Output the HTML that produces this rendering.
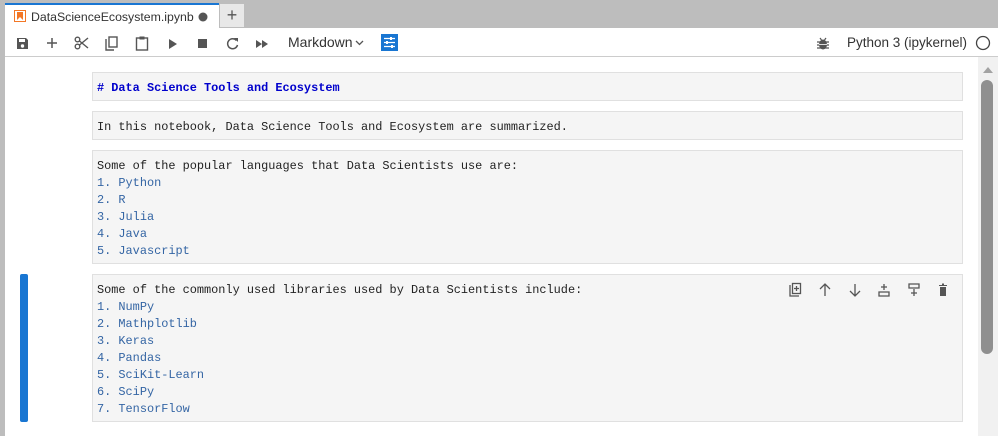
<!DOCTYPE html>
<html><head><meta charset="utf-8"><style>
*{margin:0;padding:0;box-sizing:border-box}
body{width:998px;height:436px;overflow:hidden;background:#bdbdbd;font-family:"Liberation Sans",sans-serif;position:relative}
.abs{position:absolute}
.tab{left:5px;top:3px;width:214px;height:26px;background:#fff;border-top:2px solid #1976d2}
.tab span{position:absolute;left:26px;top:5px;font-size:12.3px;color:#333}
.plus{left:220px;top:4px;width:24px;height:23px;background:#e8e8e8;color:#555;font-size:18px;text-align:center;line-height:22px}
.tb{left:5px;top:28px;width:993px;height:29px;background:#fff;border-bottom:1px solid #ccc}
.main{left:5px;top:57px;width:973px;height:379px;background:#fff}
.sb{left:978px;top:57px;width:20px;height:379px;background:#f1f1f1}
.cell{position:absolute;left:92px;width:871px;background:#f5f5f5;border:1px solid #e0e0e0;font-family:"Liberation Mono",monospace;font-size:11.9px;line-height:17px;color:#222;padding:7px 0 0 4px;white-space:pre}
.b{color:#3465a4}
.h{color:#0000cc;font-weight:bold}
svg{position:absolute}
</style></head><body>
<div class="abs tab"><svg style="left:9px;top:5px" width="12" height="12"><rect x="0.5" y="0.5" width="11" height="11" fill="#fff" stroke="#f37726"/><path d="M3 2h6v8l-3-3-3 3z" fill="#f37726"/></svg><span>DataScienceEcosystem.ipynb</span><svg style="left:193px;top:7px" width="10" height="10"><circle cx="5" cy="5" r="4.5" fill="#555"/></svg></div>
<div class="abs plus">+</div>
<div class="abs tb">
<svg style="left:11px;top:9px" width="13" height="13"><path d="M1 1h9l2 2v9H1z" fill="#555"/><rect x="3" y="2" width="6" height="3" fill="#fff"/><circle cx="6.5" cy="9" r="1.7" fill="#fff"/></svg>
<svg style="left:41px;top:9px" width="12" height="12"><path d="M6 1v10M1 6h10" stroke="#555" stroke-width="1.5"/></svg>
<svg style="left:69px;top:8px" width="15" height="14"><circle cx="3.5" cy="3.5" r="2.3" fill="none" stroke="#555" stroke-width="1.4"/><circle cx="3.5" cy="10.5" r="2.3" fill="none" stroke="#555" stroke-width="1.4"/><path d="M5.5 5L14 12M5.5 9L14 2" stroke="#555" stroke-width="1.4"/></svg>
<svg style="left:100px;top:8px" width="13" height="15"><path d="M1 3v11h8" fill="none" stroke="#555" stroke-width="1.4"/><rect x="4" y="1" width="8" height="10" fill="none" stroke="#555" stroke-width="1.4"/></svg>
<svg style="left:130px;top:7px" width="14" height="16"><rect x="1.5" y="3" width="11" height="12" fill="none" stroke="#555" stroke-width="1.4"/><rect x="4.5" y="1.5" width="5" height="3" fill="#555"/></svg>
<svg style="left:163px;top:11px" width="10" height="10"><path d="M1 0l8 5-8 5z" fill="#555"/></svg>
<svg style="left:193px;top:11px" width="10" height="10"><rect width="9" height="9" fill="#555"/></svg>
<svg style="left:221px;top:9px" width="13" height="13"><path d="M10.5 3.5A5 5 0 1 0 11.5 8" fill="none" stroke="#555" stroke-width="1.5"/><path d="M8 1h4v4z" fill="#555"/></svg>
<svg style="left:251px;top:11px" width="13" height="10"><path d="M0 1l6 4-6 4zM6 1l6 4-6 4z" fill="#555"/></svg>
<span class="abs" style="left:283px;top:6px;font-size:14px;color:#333">Markdown</span>
<svg style="left:350px;top:12px" width="9" height="6"><path d="M1 1l3.5 3.5L8 1" fill="none" stroke="#555" stroke-width="1.3"/></svg>
<svg style="left:376px;top:6px" width="17" height="17"><rect width="17" height="17" fill="#1976d2"/><path d="M3 4.5h11M3 8.5h11M3 12.5h11" stroke="#fff" stroke-width="1.3"/><rect x="9" y="3" width="2" height="3" fill="#fff"/><rect x="5" y="7" width="2" height="3" fill="#fff"/><rect x="10" y="11" width="2" height="3" fill="#fff"/></svg>
<svg style="left:812px;top:9px" width="12" height="13"><ellipse cx="6" cy="7.5" rx="4" ry="5" fill="#555"/><path d="M0 5h12M0 8h12M0 11h12M3 1l1.5 2M9 1L7.5 3" stroke="#555" stroke-width="1.2"/><path d="M2 7.5h8" stroke="#fff" stroke-width=".8"/></svg>
<span class="abs" style="left:842px;top:7px;font-size:13.5px;color:#333">Python 3 (ipykernel)</span>
<svg style="left:970px;top:7px" width="16" height="16"><circle cx="8" cy="8" r="6.5" fill="none" stroke="#444" stroke-width="1.3"/></svg>
</div>
<div class="abs main"></div>
<div class="abs sb"><svg style="left:5px;top:10px" width="10" height="6"><path d="M0 6L5 0l5 6z" fill="#a3a3a3"/></svg><div class="abs" style="left:3px;top:23px;width:12px;height:274px;background:#8f8f8f;border-radius:6px"></div></div>
<div class="cell" style="top:72px;height:29px"><span class="h"># Data Science Tools and Ecosystem</span></div>
<div class="cell" style="top:111px;height:29px">In this notebook, Data Science Tools and Ecosystem are summarized.</div>
<div class="cell" style="top:150px;height:114px">Some of the popular languages that Data Scientists use are:
<span class="b">1. Python
2. R
3. Julia
4. Java
5. Javascript</span></div>
<div class="abs" style="left:20px;top:274px;width:8px;height:148px;background:#1976d2;border-radius:2px"></div>
<div class="cell" style="top:274px;height:148px">Some of the commonly used libraries used by Data Scientists include:
<span class="b">1. NumPy
2. Mathplotlib
3. Keras
4. Pandas
5. SciKit-Learn
6. SciPy
7. TensorFlow</span></div>
<svg style="left:788px;top:282px" width="170" height="16">
<g fill="none" stroke="#555" stroke-width="1.3">
<path d="M2 3v11h9"/><rect x="4.5" y="1.5" width="8" height="10"/><path d="M8.5 4v5M6 6.5h5"/>
<path d="M37 2v12M32 7l5-5 5 5"/>
<path d="M67 2v12M62 9l5 5 5-5"/>
<path d="M91 10h10v4H91zM96 2v6M93 5h6"/>
<path d="M121 2h10v4h-10zM126 7v7M123 11h6"/>
</g>
<path d="M151 3h8v1h-8zM154 1.5h2v2h-2zM152 5h6v9h-6z" fill="#555"/>
</svg>
</body></html>
